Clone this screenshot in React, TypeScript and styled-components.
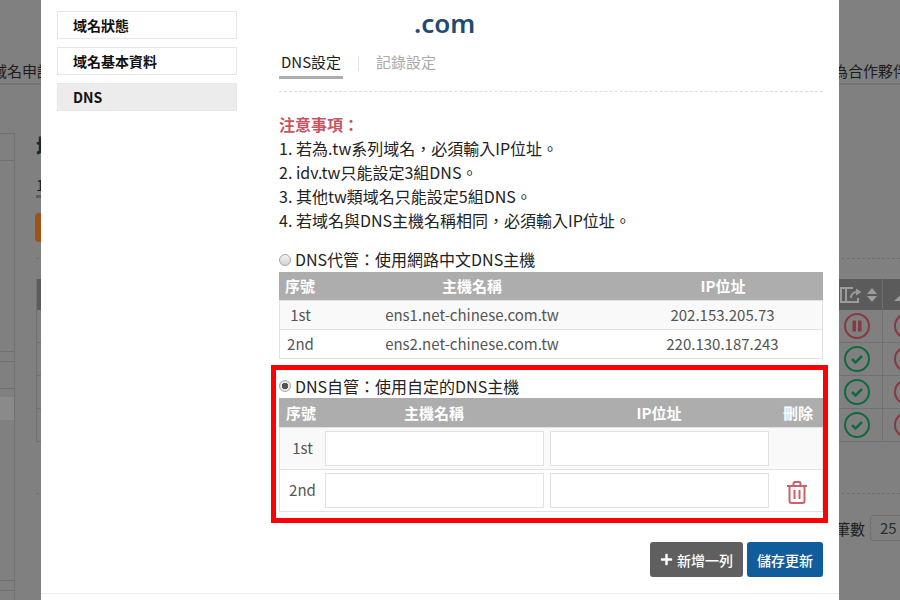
import { createGlobalStyle, styled } from 'styled-components';
import { FaPlus } from 'react-icons/fa';

const FONT = '"Noto Sans CJK TC", "Noto Sans", sans-serif';

const GlobalStyle = createGlobalStyle`
  html, body {
    margin: 0;
    padding: 0;
    width: 900px;
    height: 600px;
    overflow: hidden;
    font-family: ${FONT};
  }
`;

const Page = styled.div`
  position: relative;
  width: 900px;
  height: 600px;
  overflow: hidden;
  background: #808080;
  color: #1c1c1c;
`;

/* dimmed page behind the modal */
const PageNav = styled.div`
  height: 85px;
  box-sizing: border-box;
  padding-top: 59px;
  border-bottom: 2px solid #757575;
  display: flex;
  justify-content: space-between;
  font-size: 15px;
  line-height: 24px;
  white-space: nowrap;
  overflow: hidden;
`;

const NavLeft = styled.span`
  margin-left: -8px;
`;

const NavRight = styled.span`
  margin-right: -8px;
`;

const PageBody = styled.div`
  display: flex;
  gap: 21px;
  padding-top: 48px;
`;

const PageSide = styled.div`
  width: 15px;
  flex: none;
  height: 467px;
  box-sizing: border-box;
  border-right: 1px solid #707070;
`;

const SideBox = styled.div`
  height: 219px;
  box-sizing: border-box;
  border-top: 1px solid #707070;
  border-bottom: 1px solid #707070;
`;

const SideBoxLine = styled.div`
  height: 26px;
  border-bottom: 1px solid #707070;
`;

const SideLink = styled.div<{ $top: number; $height: number }>`
  margin-top: ${(p) => p.$top}px;
  height: ${(p) => p.$height}px;
  box-sizing: border-box;
  border-top: 1px solid #707070;
  border-bottom: 1px solid #707070;
`;

const SideShade = styled.div`
  margin-top: 8px;
  height: 23px;
  background: #8a8a8a;
`;

const PageMain = styled.div`
  width: 864px;
  flex: none;
`;

const PageHeading = styled.div`
  height: 24px;
  font-size: 22px;
  font-weight: 700;
  line-height: 24px;
  color: #12283c;
`;

const PageTab = styled.div`
  margin-top: 17px;
  height: 21px;
  width: 20px;
  border-bottom: 3px solid #5e5e5e;
  font-size: 15px;
  line-height: 22px;
`;

const OrangeButton = styled.div`
  margin: 15px 0 0 -1px;
  width: 40px;
  height: 29px;
  border-radius: 4px;
  background: #9b5318;
`;

const PageDashed = styled.div<{ $top: number }>`
  margin-top: ${(p) => p.$top}px;
  border-top: 1px dashed #707070;
`;

const PageTable = styled.div`
  margin-top: 20px;
  border-left: 1px solid #707070;
`;

const PageRow = styled.div`
  display: grid;
  grid-template-columns: 846px 1fr;
  height: 33px;
  box-sizing: border-box;
  border-bottom: 1px solid #707070;
`;

const PageHeadRow = styled(PageRow)`
  height: 31px;
  background: #5b5b5b;
  border-bottom: none;
`;

const StatusCell = styled.div`
  display: flex;
  align-items: center;
  padding-left: 807px;
  border-right: 1px solid #707070;
`;

const HeadIconCell = styled(StatusCell)`
  padding-left: 803px;
  gap: 5px;
  border-right-color: #6c6c6c;
`;

const NextCell = styled.div`
  display: flex;
  align-items: center;
  padding-left: 11px;
`;

const PageFooter = styled.div`
  display: flex;
  justify-content: flex-end;
  align-items: center;
  gap: 5px;
  margin-top: 21px;
  height: 26px;
  font-size: 15px;
`;

const PerPage = styled.div`
  width: 40px;
  height: 26px;
  margin-right: -10px;
  flex: none;
  box-sizing: border-box;
  border: 1px solid #707070;
  border-radius: 3px;
  padding-left: 9px;
  line-height: 24px;
  font-size: 15px;
  color: #2c2c2c;
`;

/* modal */
const Modal = styled.div`
  position: absolute;
  top: 0;
  left: 41px;
  width: 798px;
  height: 600px;
  box-sizing: border-box;
  background: #fff;
  padding: 11px 16px 0;
  display: flex;
  gap: 42px;
`;

const SideMenu = styled.div`
  width: 180px;
  flex: none;
  display: flex;
  flex-direction: column;
  gap: 8px;
`;

const SideItem = styled.div<{ $active?: boolean }>`
  height: 28px;
  box-sizing: border-box;
  border: 1px solid #e6e6e6;
  background: ${(p) => (p.$active ? '#ececec' : '#fff')};
  padding-left: 15px;
  font-size: 14px;
  font-weight: 700;
  line-height: 26px;
  color: #111;
`;

const Content = styled.div`
  width: 544px;
  flex: none;
`;

const DomainTitle = styled.div`
  margin-top: -3px;
  height: 30px;
  padding-left: 135px;
  font-family: "Noto Sans", sans-serif;
  font-size: 26px;
  font-weight: 600;
  line-height: 30px;
  color: #1f4b73;
`;

const Tabs = styled.div`
  display: flex;
  margin-top: 12px;
  height: 26px;
  padding-bottom: 15px;
  border-bottom: 1px dashed #dddddd;
`;

const Tab = styled.div<{ $active?: boolean }>`
  font-size: 15px;
  line-height: 23px;
  height: 26px;
  padding: 0 2px;
  color: ${(p) => (p.$active ? '#222' : '#aaa')};
  border-bottom: ${(p) => (p.$active ? '3px solid #adadad' : 'none')};
`;

const TabDivider = styled.div`
  width: 1px;
  height: 15px;
  margin: 6px 15px 0;
  background: #e4e4e4;
`;

const Notes = styled.div`
  margin-top: 20px;
  font-size: 16px;
  line-height: 24px;
  color: #222;
`;

const NotesTitle = styled.div`
  font-weight: 700;
  color: #c9545f;
`;

const OptionRow = styled.label`
  display: flex;
  align-items: center;
  gap: 4px;
  height: 25px;
  padding-bottom: 2px;
  box-sizing: border-box;
  font-size: 16px;
  color: #222;
`;

const Radio = styled.span<{ $checked?: boolean }>`
  width: 12px;
  height: 12px;
  margin-top: 2px;
  box-sizing: border-box;
  border-radius: 50%;
  border: 1px solid #a8a8a8;
  background: ${(p) =>
    p.$checked
      ? 'radial-gradient(circle, #555 0 3px, #e8e8e8 3.5px)'
      : 'linear-gradient(#f2f2f2, #d4d4d4)'};
`;

const ManagedBlock = styled.div`
  margin-top: 15px;
`;

const SelfBlock = styled.div`
  position: relative;
  margin-top: 15px;
`;

const SelfOption = styled(OptionRow)`
  height: 24px;
  padding-bottom: 0;

  ${Radio} {
    margin-top: 0;
  }
`;

const Highlight = styled.div`
  position: absolute;
  top: -9px;
  left: -8px;
  width: 557px;
  height: 158px;
  box-sizing: border-box;
  border: 5px solid #ff0000;
  pointer-events: none;
`;

const Table = styled.div`
  border: 1px solid #e2e2e2;
  border-top: none;
`;

const Row = styled.div<{ $cols: string; $height: number; $shade?: boolean }>`
  display: grid;
  grid-template-columns: ${(p) => p.$cols};
  height: ${(p) => p.$height}px;
  align-items: center;
  background: ${(p) => (p.$shade ? '#f9f9f9' : '#fff')};
  border-top: 1px solid #e2e2e2;
  font-size: 15px;
  color: #555;
  text-align: center;
`;

const HeadRow = styled(Row)`
  background: #adadad;
  border-top: none;
  margin: 0 -1px;
  color: #fff;
  font-weight: 700;
`;

const CellText = styled.div`
  margin-bottom: 2px;
`;

const InputLabel = styled.div`
  margin-bottom: 3px;
`;

const Input = styled.input`
  display: block;
  width: 100%;
  height: 35px;
  box-sizing: border-box;
  border: 1px solid #e2e2e2;
  background: #fff;
  padding: 0 8px;
  outline: none;
`;

const InputCell = styled.div`
  padding-right: 6px;
`;

const DeleteCell = styled.div`
  display: flex;
  justify-content: center;
  padding-right: 4px;
  padding-top: 3px;
`;

const Actions = styled.div`
  display: flex;
  justify-content: flex-end;
  gap: 4px;
  margin-top: 30px;
`;

const Button = styled.button<{ $bg: string }>`
  height: 35px;
  padding: 0 10px;
  display: flex;
  align-items: center;
  gap: 4px;
  border: none;
  border-radius: 3px;
  background: ${(p) => p.$bg};
  color: #fff;
  font-family: inherit;
  font-size: 14px;
  font-weight: 500;
`;

const ModalFooterLine = styled.div`
  position: absolute;
  left: 0;
  right: 0;
  top: 593px;
  height: 1px;
  background: #ececec;
`;

const COLS_A_HEAD = '42px 302px 1fr';
const COLS_A = '41px 302px 1fr';
const COLS_B_HEAD = '44px 222px 228px 1fr';
const COLS_B = '45px 225px 225px 1fr';

function TrashIcon() {
  return (
    <svg width="20" height="23" viewBox="0 0 20 23" fill="none" stroke="#cf5f68" strokeWidth="2">
      <path d="M0 5h20" />
      <path d="M6.5 5V2.5a1.5 1.5 0 0 1 1.5-1.5h4a1.5 1.5 0 0 1 1.5 1.5V5" />
      <path d="M2.5 5v15a2 2 0 0 0 2 2h11a2 2 0 0 0 2-2V5" />
      <path d="M7.5 9v9M12.5 9v9" />
    </svg>
  );
}

function StatusIcon({ kind }: { kind: 'pause' | 'check' | 'ring' }) {
  const color = kind === 'check' ? '#116a3b' : '#843a40';
  return (
    <svg width="26" height="26" viewBox="0 0 26 26" fill="none" stroke={color} strokeWidth="2">
      <circle cx="13" cy="13" r="12" />
      {kind === 'pause' && (
        <path d="M8.5 7.5h3.5v11H8.5zM14 7.5h3.5v11H14z" fill={color} stroke="none" />
      )}
      {kind === 'check' && <path d="M8 13l3.5 3.5L18 10" strokeWidth="2.5" />}
    </svg>
  );
}

function TransferIcon() {
  return (
    <svg width="22" height="16" viewBox="0 0 22 16" fill="none" stroke="#9c9c9c" strokeWidth="2">
      <path d="M13 1H1v14h17v-4" />
      <path d="M6 1v14" />
      <path d="M11 11c0-4 3-6 6-6" />
      <path d="M16 1.5L21.5 5 16 8.5z" fill="#9c9c9c" stroke="none" />
    </svg>
  );
}

function SortIcon() {
  return (
    <svg width="10" height="14" viewBox="0 0 10 14" fill="#9c9c9c">
      <path d="M5 0l5 6H0zM5 14L0 8h10z" />
    </svg>
  );
}

function ArrowUpIcon() {
  return (
    <svg width="17" height="14" viewBox="0 0 17 14" fill="#9c9c9c">
      <path d="M12 2L0 13h17V9z" />
    </svg>
  );
}

function StatusRow({ kind }: { kind: 'pause' | 'check' }) {
  return (
    <PageRow>
      <StatusCell>
        <StatusIcon kind={kind} />
      </StatusCell>
      <NextCell>
        <StatusIcon kind="ring" />
      </NextCell>
    </PageRow>
  );
}

export default function App() {
  return (
    <Page lang="zh-TW">
      <GlobalStyle />
      <PageNav>
        <NavLeft>域名申請</NavLeft>
        <NavRight>為合作夥伴</NavRight>
      </PageNav>
      <PageBody>
        <PageSide>
          <SideBox>
            <SideBoxLine />
          </SideBox>
          <SideLink $top={9} $height={28} />
          <SideShade />
          <SideLink $top={160} $height={11} />
        </PageSide>
        <PageMain>
          <PageHeading>域</PageHeading>
          <PageTab>1</PageTab>
          <OrangeButton />
          <PageDashed $top={16} />
          <PageTable>
            <PageHeadRow>
              <HeadIconCell>
                <TransferIcon />
                <SortIcon />
              </HeadIconCell>
              <NextCell>
                <ArrowUpIcon />
              </NextCell>
            </PageHeadRow>
            <StatusRow kind="pause" />
            <StatusRow kind="check" />
            <StatusRow kind="check" />
            <StatusRow kind="check" />
          </PageTable>
          <PageDashed $top={51} />
          <PageFooter>
            筆數
            <PerPage>25</PerPage>
          </PageFooter>
        </PageMain>
      </PageBody>
      <Modal>
        <SideMenu>
          <SideItem>域名狀態</SideItem>
          <SideItem>域名基本資料</SideItem>
          <SideItem $active>DNS</SideItem>
        </SideMenu>
        <Content>
          <DomainTitle>.com</DomainTitle>
          <Tabs>
            <Tab $active>DNS設定</Tab>
            <TabDivider />
            <Tab>記錄設定</Tab>
          </Tabs>
          <Notes>
            <NotesTitle>注意事項：</NotesTitle>
            <div>1. 若為.tw系列域名，必須輸入IP位址。</div>
            <div>2. idv.tw只能設定3組DNS。</div>
            <div>3. 其他tw類域名只能設定5組DNS。</div>
            <div>4. 若域名與DNS主機名稱相同，必須輸入IP位址。</div>
          </Notes>
          <ManagedBlock>
            <OptionRow>
              <Radio />
              DNS代管：使用網路中文DNS主機
            </OptionRow>
            <Table>
              <HeadRow $cols={COLS_A_HEAD} $height={28}>
                <CellText>序號</CellText>
                <CellText>主機名稱</CellText>
                <CellText>IP位址</CellText>
              </HeadRow>
              <Row $cols={COLS_A} $height={28} $shade>
                <CellText>1st</CellText>
                <CellText>ens1.net-chinese.com.tw</CellText>
                <CellText>202.153.205.73</CellText>
              </Row>
              <Row $cols={COLS_A} $height={28}>
                <CellText>2nd</CellText>
                <CellText>ens2.net-chinese.com.tw</CellText>
                <CellText>220.130.187.243</CellText>
              </Row>
            </Table>
          </ManagedBlock>
          <SelfBlock>
            <Highlight />
            <SelfOption>
              <Radio $checked />
              DNS自管：使用自定的DNS主機
            </SelfOption>
            <Table>
              <HeadRow $cols={COLS_B_HEAD} $height={29}>
                <div>序號</div>
                <div>主機名稱</div>
                <div>IP位址</div>
                <div>刪除</div>
              </HeadRow>
              <Row $cols={COLS_B} $height={41} $shade>
                <InputLabel>1st</InputLabel>
                <InputCell>
                  <Input />
                </InputCell>
                <InputCell>
                  <Input />
                </InputCell>
              </Row>
              <Row $cols={COLS_B} $height={41}>
                <InputLabel>2nd</InputLabel>
                <InputCell>
                  <Input />
                </InputCell>
                <InputCell>
                  <Input />
                </InputCell>
                <DeleteCell>
                  <TrashIcon />
                </DeleteCell>
              </Row>
            </Table>
          </SelfBlock>
          <Actions>
            <Button $bg="#5f5f5f">
              <FaPlus size={13} />
              新增一列
            </Button>
            <Button $bg="#115d9c">儲存更新</Button>
          </Actions>
        </Content>
        <ModalFooterLine />
      </Modal>
    </Page>
  );
}
